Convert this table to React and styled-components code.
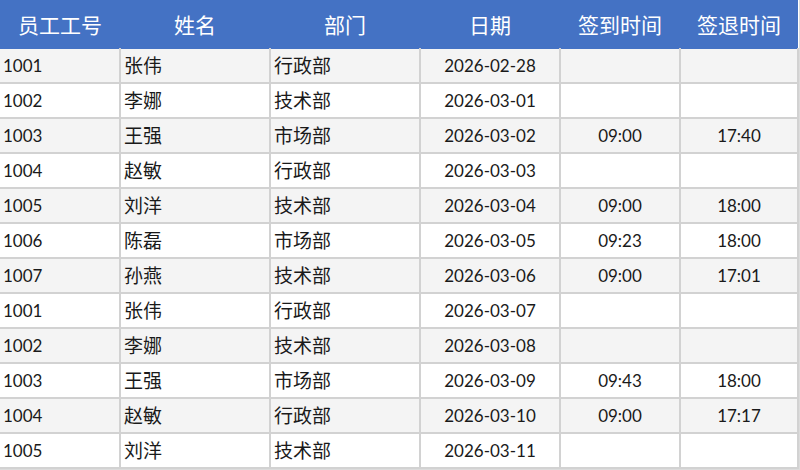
import styled, { createGlobalStyle } from "styled-components";

const Global = createGlobalStyle`
  html, body {
    margin: 0;
    padding: 0;
    background: #dcdcdc;
  }
  body {
    font-family: Lato, "Noto Sans CJK SC", sans-serif;
  }
`;

const Sheet = styled.table`
  width: 798px;
  border-collapse: collapse;
  table-layout: fixed;
  background: #fff;
`;

const Head = styled.th`
  height: 48px;
  padding: 0;
  background: #4472c4;
  color: #fff;
  font-weight: normal;
  font-size: 21px;
  text-align: center;
  vertical-align: middle;
  border-bottom: 1px solid #4472c4;
`;

const Row = styled.tr`
  background: ${(p) => (p.$striped ? "#f4f4f4" : "#ffffff")};
`;

const Cell = styled.td`
  height: 33px;
  padding: 0 3px;
  border: 2px solid #d2d2d2;
  border-top: 0;
  color: #1a1a1a;
  font-size: ${(p) => (p.$cjk ? "19px" : "17px")};
  text-align: ${(p) => (p.$center ? "center" : "left")};
  vertical-align: middle;
  white-space: nowrap;
  line-height: 1;
  &:first-child {
    border-left: 0;
  }
`;

const cols = [
  { title: "员工工号", width: 120 },
  { title: "姓名", width: 150 },
  { title: "部门", width: 150 },
  { title: "日期", width: 140 },
  { title: "签到时间", width: 120 },
  { title: "签退时间", width: 118 },
];

const rows = [
  ["1001", "张伟", "行政部", "2026-02-28", "", ""],
  ["1002", "李娜", "技术部", "2026-03-01", "", ""],
  ["1003", "王强", "市场部", "2026-03-02", "09:00", "17:40"],
  ["1004", "赵敏", "行政部", "2026-03-03", "", ""],
  ["1005", "刘洋", "技术部", "2026-03-04", "09:00", "18:00"],
  ["1006", "陈磊", "市场部", "2026-03-05", "09:23", "18:00"],
  ["1007", "孙燕", "技术部", "2026-03-06", "09:00", "17:01"],
  ["1001", "张伟", "行政部", "2026-03-07", "", ""],
  ["1002", "李娜", "技术部", "2026-03-08", "", ""],
  ["1003", "王强", "市场部", "2026-03-09", "09:43", "18:00"],
  ["1004", "赵敏", "行政部", "2026-03-10", "09:00", "17:17"],
  ["1005", "刘洋", "技术部", "2026-03-11", "", ""],
];

export default function App() {
  return (
    <>
      <Global />
      <Sheet>
        <colgroup>
          {cols.map((c) => (
            <col key={c.title} style={{ width: c.width }} />
          ))}
        </colgroup>
        <thead>
          <tr>
            {cols.map((c) => (
              <Head key={c.title}>{c.title}</Head>
            ))}
          </tr>
        </thead>
        <tbody>
          {rows.map((r, i) => (
            <Row key={i} $striped={i % 2 === 0}>
              {r.map((v, j) => (
                <Cell key={j} $center={j >= 3} $cjk={j === 1 || j === 2}>
                  {v}
                </Cell>
              ))}
            </Row>
          ))}
        </tbody>
      </Sheet>
    </>
  );
}
